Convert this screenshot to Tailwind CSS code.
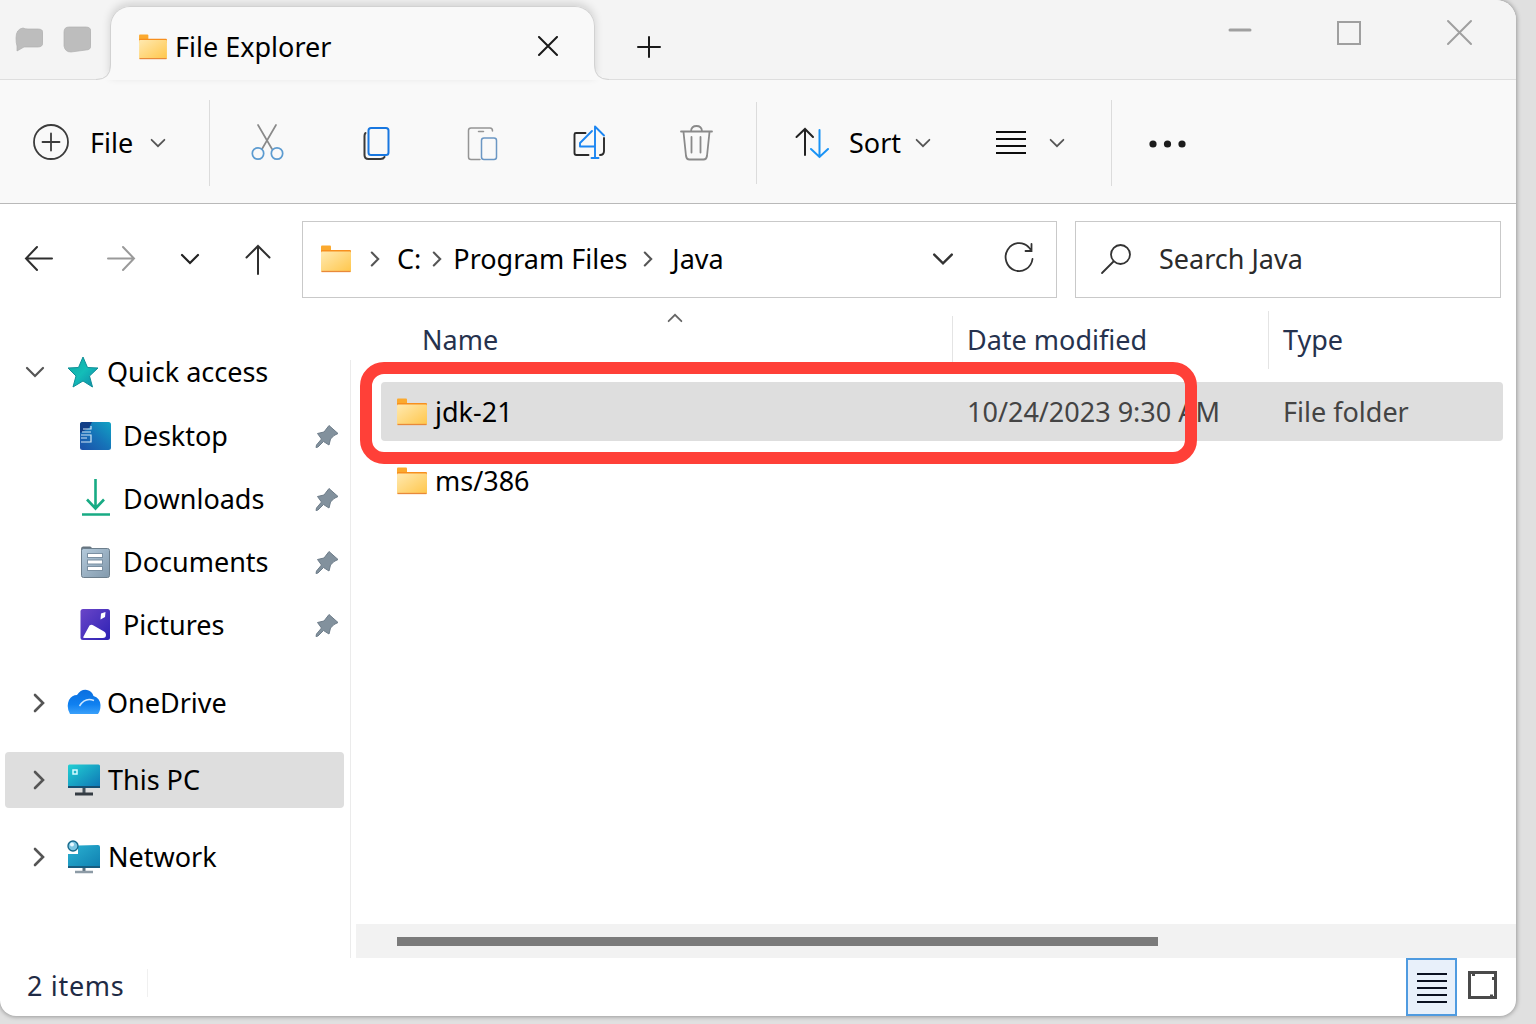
<!DOCTYPE html>
<html lang="en">
<head>
  <meta charset="UTF-8" />
  <meta name="viewport" content="width=device-width, initial-scale=1.0" />
  <title>File Explorer</title>
  <script src="https://cdn.jsdelivr.net/npm/@tailwindcss/browser@4"></script>
</head>
<body class="h-screen bg-[#e0e0e0] pr-5 pb-2 font-['Noto_Sans',sans-serif] text-[27px] leading-9 text-black">

  <!-- Shared icons -->
  <svg class="absolute h-0 w-0" aria-hidden="true">
    <defs>
      <linearGradient id="g-folder" x1="0" y1="0" x2="1" y2="1">
        <stop offset="0" stop-color="#ffe9b0" /><stop offset="1" stop-color="#ffc64a" />
      </linearGradient>
      <linearGradient id="g-star" x1="0" y1="0" x2="1" y2="1">
        <stop offset="0" stop-color="#10a9a0" /><stop offset="0.5" stop-color="#13bdb8" /><stop offset="1" stop-color="#0d86a8" />
      </linearGradient>
      <linearGradient id="g-desktop" x1="0" y1="1" x2="1" y2="0">
        <stop offset="0" stop-color="#1b4fa8" /><stop offset="0.5" stop-color="#1673b8" /><stop offset="1" stop-color="#12a3c4" />
      </linearGradient>
      <linearGradient id="g-docs" x1="0" y1="0" x2="1" y2="1">
        <stop offset="0" stop-color="#b4cadb" /><stop offset="1" stop-color="#8299ac" />
      </linearGradient>
      <linearGradient id="g-pics" x1="0" y1="0" x2="1" y2="1">
        <stop offset="0" stop-color="#6a45c8" /><stop offset="1" stop-color="#2d22b4" />
      </linearGradient>
      <linearGradient id="g-cloud" x1="0" y1="0" x2="0" y2="1">
        <stop offset="0" stop-color="#0a6fe0" /><stop offset="0.6" stop-color="#0f80f0" /><stop offset="1" stop-color="#3aa0fa" />
      </linearGradient>
      <linearGradient id="g-screen" x1="0" y1="0" x2="1" y2="1">
        <stop offset="0" stop-color="#22d0d4" /><stop offset="1" stop-color="#0e74b4" />
      </linearGradient>
      <linearGradient id="g-net" x1="0" y1="0" x2="1" y2="1">
        <stop offset="0" stop-color="#2bb2d2" /><stop offset="1" stop-color="#0f7fb0" />
      </linearGradient>
    </defs>
    <symbol id="folder" viewBox="0 0 30 28">
      <path d="M0 1.500Q0 .5 1 .5h8q1 0 1 1V8H0z" fill="#fba92e" />
      <rect y="5" width="30" height="5" rx="1" fill="#f78f1e" />
      <rect y="6.500" width="30" height="20.500" rx="1" fill="url(#g-folder)" />
      <path d="M.5 26.500h29" stroke="#e8893a" stroke-width="1.300" />
    </symbol>
    <symbol id="pin" viewBox="0 0 24 24">
      <path d="M14 1.500 23 9.500l-4 2-3.500 3.500-1.500 6L8.500 17.500 3 23l-2 .5.500-2.500 5-6L2.500 9.500 9 8z" fill="#82919d" stroke="#6d7c89" stroke-width="1" stroke-linejoin="round" />
    </symbol>
    <symbol id="down" viewBox="0 0 20 12">
      <path d="M2 2l8 8 8-8" fill="none" stroke="currentColor" stroke-width="2.200" stroke-linecap="round" />
    </symbol>
    <symbol id="right" viewBox="0 0 12 20">
      <path d="M2 2l8 8-8 8" fill="none" stroke="currentColor" stroke-width="2.600" stroke-linecap="round" />
    </symbol>
  </svg>

  <div class="flex h-full flex-col overflow-hidden rounded-tr-[20px] rounded-b-[16px] bg-white shadow-[0_0_4px_1px_#9a9a9a]">

    <!-- Title bar -->
    <header class="flex h-20 shrink-0 items-end border-b border-[#dedede] bg-[#f4f4f4]">
      <div class="flex h-full w-[110px] items-center gap-5 pl-[15px] text-[#bdbdbd]">
        <svg class="h-7 w-7" viewBox="0 0 28 28" fill="currentColor"><path d="M1 12Q1 3 8 2q2 1 5 1h10q5 0 5 4v9q0 5-5 5H9l-7 4V20Q1 17 1 12z" stroke="#b0b0b0" stroke-width=".7" /></svg>
        <svg class="h-7 w-7" viewBox="0 0 28 28" fill="currentColor"><path d="M6 1h17q5 0 5 5v13q0 5-5 5l-15 2q-6 0-7-6V6q0-5 5-5z" stroke="#b0b0b0" stroke-width=".7" /></svg>
      </div>
      <div class="relative -mb-px flex h-[74px] w-[485px] items-center rounded-t-[20px] bg-[#f9f9f9] pt-2 pr-9 pl-[29px] shadow-[0_-3px_8px_rgba(0,0,0,0.14)]">
        <div class="absolute inset-0 rounded-t-[20px] border border-b-0 border-[#d2d2d2]"></div>
        <!-- Flared bottom corners of the tab -->
        <svg class="absolute bottom-0 -left-[14px] h-[15px] w-[15px]" viewBox="0 0 15 15"><path d="M0 15V14.500Q14.500 14.500 14.500 0h.5v15z" fill="#f9f9f9" /><path d="M0 14.500Q14.500 14.500 14.500 0" fill="none" stroke="#d2d2d2" /></svg>
        <svg class="absolute -right-[14px] bottom-0 h-[15px] w-[15px]" viewBox="0 0 15 15"><path d="M15 15V14.500Q.5 14.500 .5 0H0v15z" fill="#f9f9f9" /><path d="M15 14.500Q.5 14.500 .5 0" fill="none" stroke="#d2d2d2" /></svg>
        <svg class="h-[26px] w-7"><use href="#folder" /></svg>
        <h1 class="ml-2 flex-1">File Explorer</h1>
        <button class="relative" aria-label="Close tab">
          <svg class="h-[22px] w-[22px]" viewBox="0 0 22 22"><path d="M2 1l18 18M20 1L2 19" stroke="#1a1a1a" stroke-width="2" stroke-linecap="round" /></svg>
        </button>
      </div>
      <button class="mb-5 ml-[42px]" aria-label="New tab">
        <svg class="h-6 w-6" viewBox="0 0 24 24"><path d="M1 12h22M12 2v20" stroke="#1a1a1a" stroke-width="2" stroke-linecap="round" /></svg>
      </button>
      <div class="mr-[43px] mb-8 ml-auto flex items-center gap-[82px] text-[#9f9f9f]">
        <button aria-label="Minimize"><svg class="h-7 w-7" viewBox="0 0 28 28"><path d="M5 11h20" stroke="currentColor" stroke-width="3" stroke-linecap="round" /></svg></button>
        <button aria-label="Maximize"><svg class="h-7 w-7" viewBox="0 0 28 28"><rect x="3" y="3" width="22" height="22" fill="none" stroke="currentColor" stroke-width="2" /></svg></button>
        <button aria-label="Close"><svg class="h-7 w-7" viewBox="0 0 28 28"><path d="M3 2l23 23M26 2L3 25" stroke="currentColor" stroke-width="2" stroke-linecap="round" /></svg></button>
      </div>
    </header>

    <!-- Toolbar -->
    <div class="flex h-[124px] shrink-0 items-center border-b border-[#b9b9b9] bg-[#f9f9f9] pt-[3px]">
      <button class="flex w-[209px] items-center pl-8">
        <svg class="h-[38px] w-[38px]" viewBox="0 0 38 38" fill="none" stroke="#3c3c3c" stroke-width="1.800"><circle cx="19" cy="18" r="17" /><path d="M10.500 18h17M19 9.500v17" stroke-linecap="round" /></svg>
        <span class="mr-[17px] ml-5">File</span>
        <svg class="h-[10px] w-4 text-[#555]"><use href="#down" /></svg>
      </button>
      <div class="h-[86px] border-l border-[#dcdcdc]"></div>
      <div class="flex px-1">
        <button class="flex w-[107px] justify-center" aria-label="Cut">
          <svg class="h-10 w-10" viewBox="0 0 40 40" fill="none" stroke-width="1.700"><path d="M10 2l14 24M28 2L14 26" stroke="#8a8a8a" stroke-linecap="round" /><circle cx="10" cy="30.500" r="5.700" stroke="#5c9bd0" /><circle cx="29" cy="30.500" r="5.700" stroke="#5c9bd0" /></svg>
        </button>
        <button class="flex w-[107px] justify-center" aria-label="Copy">
          <svg class="h-10 w-10" viewBox="0 0 40 40" fill="none" stroke-width="2"><path d="M10.500 10q-1 1-1 3v19q0 4 4 4h12q3 0 4-2" stroke="#3a3a3a" stroke-linecap="round" /><rect x="13.500" y="5" width="20" height="27" rx="2.500" stroke="#1877e0" /></svg>
        </button>
        <button class="flex w-[107px] justify-center" aria-label="Paste">
          <svg class="h-10 w-10" viewBox="0 0 40 40" fill="none" stroke-width="1.500"><path d="M18 36.500H9q-2.500 0-2.500-2.500V7.500Q6.500 5 9 5h19q2.500 0 2.500 3M16.500 8.500h5" stroke="#959595" stroke-linecap="round" /><rect x="19.500" y="15" width="15" height="21.500" rx="2.500" stroke="#6b97c4" /></svg>
        </button>
        <button class="flex w-[107px] justify-center" aria-label="Rename">
          <svg class="h-10 w-10" viewBox="0 0 40 40" fill="none" stroke-width="1.900"><path d="M16.500 10H7q-1.500 0-1.500 1.500V30q0 2 2 2h12M35 15v13q0 4-4 4" stroke="#2b2b2b" stroke-linecap="round" /><path d="M23 8L11 20v3.500h15M26 35V3.500l9 9M22.500 35h7" stroke="#1c86f2" stroke-linejoin="round" stroke-linecap="round" /></svg>
        </button>
        <button class="flex w-[107px] justify-center" aria-label="Delete">
          <svg class="h-10 w-10" viewBox="0 0 40 40" fill="none" stroke="#8a8a8a" stroke-width="1.800" stroke-linecap="round"><path d="M5 8.500h31M7.500 9l2.500 24q.5 3.500 3.500 3.500h14q3 0 3.500-3.500L33.500 9M15 8q.5-5 5.500-5T26 8M15.500 14v15.500M24.500 14v15.500" /></svg>
        </button>
      </div>
      <div class="ml-[3px] h-[82px] border-l border-[#dcdcdc]"></div>
      <button class="ml-[38px] flex items-center">
        <svg class="h-8 w-[34px]" viewBox="0 0 34 32" fill="none" stroke-width="2" stroke-linecap="round"><path d="M10 28V2M1.500 10L10 2l8 8" stroke="#222" /><path d="M24.500 3v27M16 22l8.500 8 8.500-8" stroke="#1a93f5" /></svg>
        <span class="mr-[14px] ml-5">Sort</span>
        <svg class="h-[10px] w-4 text-[#555]"><use href="#down" /></svg>
      </button>
      <button class="ml-16 flex items-center gap-[22px]" aria-label="View">
        <svg class="h-7 w-8" viewBox="0 0 32 28"><path d="M1 3h30M1 10h30M1 17h30M1 24h30" stroke="#0d0d0d" stroke-width="2.200" /></svg>
        <svg class="h-[10px] w-4 text-[#555]"><use href="#down" /></svg>
      </button>
      <div class="ml-[46px] h-[86px] border-l border-[#dcdcdc]"></div>
      <button class="ml-9 pt-0.5" aria-label="More">
        <svg class="h-2 w-10" viewBox="0 0 40 8" fill="#1c1c1c"><circle cx="5" cy="4" r="3.600" /><circle cx="19.500" cy="4" r="3.600" /><circle cx="34" cy="4" r="3.600" /></svg>
      </button>
    </div>

    <!-- Navigation row -->
    <div class="flex shrink-0 items-center pt-[17px] pr-[15px]">
      <nav class="flex w-[302px] shrink-0 items-center pb-0.5 pl-6">
        <button class="mr-[52px]" aria-label="Back"><svg class="h-7 w-[30px]" viewBox="0 0 30 28" fill="none" stroke="#2f2f2f" stroke-width="2" stroke-linecap="round"><path d="M28 13.500H2M13 2L2 13.500 13 25" /></svg></button>
        <button class="mr-11" aria-label="Forward"><svg class="h-7 w-[30px]" viewBox="0 0 30 28" fill="none" stroke="#9a9a9a" stroke-width="2" stroke-linecap="round"><path d="M2 13.500h26M17 2l11 11.500L17 25" /></svg></button>
        <button class="mr-[45px]" aria-label="Recent locations"><svg class="h-3 w-5 text-[#222]"><use href="#down" /></svg></button>
        <button aria-label="Up"><svg class="h-8 w-[26px]" viewBox="0 0 26 32" fill="none" stroke="#2f2f2f" stroke-width="2" stroke-linecap="round"><path d="M13 31V3M1.500 14.500L13 3l11.500 11.500" /></svg></button>
      </nav>
      <div class="flex h-[77px] flex-1 items-center border border-[#c9c9c9] pr-[22px] pb-0.5 pl-[18px] whitespace-nowrap">
        <svg class="mr-[19px] h-7 w-[30px]"><use href="#folder" /></svg>
        <svg class="mr-[17px] h-4 w-[10px] text-[#555]"><use href="#right" /></svg>
        <a href="#">C:</a>
        <svg class="mx-[11px] h-4 w-[10px] text-[#555]"><use href="#right" /></svg>
        <a href="#">Program Files</a>
        <svg class="mr-[19px] ml-4 h-4 w-[10px] text-[#555]"><use href="#right" /></svg>
        <a href="#">Java</a>
        <button class="mr-[50px] ml-auto" aria-label="Previous locations"><svg class="h-[14px] w-[22px] text-[#333]"><use href="#down" /></svg></button>
        <button aria-label="Refresh"><svg class="h-[34px] w-[30px]" viewBox="0 0 30 34" fill="none" stroke="#333" stroke-width="1.800" stroke-linecap="round"><path d="M28.500 17A13.500 14 0 1 1 24.500 5L27 8M27.500 2v7h-6" /></svg></button>
      </div>
      <label class="ml-[18px] flex h-[77px] w-[426px] items-center border border-[#c9c9c9] pb-0.5 pl-6">
        <svg class="h-8 w-8 shrink-0" viewBox="0 0 32 32" fill="none" stroke="#333" stroke-width="1.800" stroke-linecap="round"><circle cx="20.500" cy="11.500" r="9.500" /><path d="M13.500 18.500L2 30" /></svg>
        <input type="search" placeholder="Search Java" aria-label="Search Java" class="ml-[27px] w-full min-w-0 outline-none placeholder:text-[#2b2b2b]" />
      </label>
    </div>

    <div class="flex min-h-0 flex-1">
      <!-- Sidebar -->
      <aside class="w-[350px] shrink-0 pt-[46px] pr-[6px] pl-[5px]">
        <a href="#" class="flex h-14 items-center pl-5">
          <svg class="h-3 w-5 text-[#555]"><use href="#down" /></svg>
          <svg class="mr-2 ml-[22px] h-8 w-8" viewBox="0 0 32 32"><path d="M16 1l4.500 10.500L31 12l-8.500 8 3 11L16 25l-10 6 3-11L1 12l10.500-.5z" fill="url(#g-star)" stroke="#0f8f97" stroke-linejoin="round" /></svg>
          Quick access
        </a>
        <div class="mt-1 pr-[5px] pl-[74px]">
          <a href="#" class="flex h-[63px] items-center">
            <svg class="mr-3 h-8 w-8" viewBox="0 0 32 32"><rect x="1" y="2" width="31" height="28" rx="2.500" fill="url(#g-desktop)" /><path d="M1 4.500Q1 2 3.500 2H13l-3 6-9 5z" fill="#123f87" /><path d="M3 12h9M4 9h8V6M2 15h10v7H2M2 18h6" fill="none" stroke="#cfe6f5" stroke-width="1.200" /></svg>
            <span class="flex-1">Desktop</span>
            <svg class="h-6 w-6"><use href="#pin" /></svg>
          </a>
          <a href="#" class="flex h-[63px] items-center">
            <svg class="mr-3 h-10 w-8" viewBox="0 0 32 40" fill="none" stroke="#18ab84" stroke-width="2.600"><path d="M16.500 0v29M8 20.500l8.500 9 8.500-9M3 35.500h28" /></svg>
            <span class="flex-1">Downloads</span>
            <svg class="h-6 w-6"><use href="#pin" /></svg>
          </a>
          <a href="#" class="flex h-[63px] items-center">
            <svg class="mr-3 h-8 w-8" viewBox="0 0 32 32"><path d="M2 3q0-2.500 2-2.500h7q1.500 0 2 2V6H2z" fill="#66747f" /><rect x="2.500" y="2.500" width="28" height="29" rx="2" fill="url(#g-docs)" stroke="#6c7e8c" /><path d="M8 9.500h16M8 16h16M8 22.500h16" stroke="#7b90a2" stroke-width="5" /><path d="M9 9.500h14M9 16h14M9 22.500h14" stroke="#fff" stroke-width="2.800" /></svg>
            <span class="flex-1">Documents</span>
            <svg class="h-6 w-6"><use href="#pin" /></svg>
          </a>
          <a href="#" class="flex h-[63px] items-center">
            <svg class="mr-3 h-8 w-8" viewBox="0 0 32 32"><rect x="1.500" y="0" width="29.500" height="31" rx="2.500" fill="url(#g-pics)" /><path d="M4 28.500Q8 21 10.500 16.500q2-1.500 4 0L25 22.500q3 2 1.500 5.500-1 1-3 1H5.500z" fill="#fff" /><path d="M22 4.500l4.500-1.500-.5 5-4.500 2.500z" fill="#fff" /></svg>
            <span class="flex-1">Pictures</span>
            <svg class="h-6 w-6"><use href="#pin" /></svg>
          </a>
        </div>
        <div class="mt-[19px] flex flex-col gap-[21px]">
          <a href="#" class="flex h-14 items-center pl-7">
            <svg class="h-5 w-3 text-[#555]"><use href="#right" /></svg>
            <svg class="mr-[6px] ml-[22px] h-8 w-[34px]" viewBox="0 0 34 32"><path d="M3 27Q-1 20 2 13q3-5 8-5Q14 2 20 3q5 1 6.500 6Q33 11 33.500 18q0 6-2.500 9z" fill="url(#g-cloud)" /><path d="M12.500 19Q18 10 27 13.500" fill="none" stroke="#cfe8ff" stroke-width="1.500" /></svg>
            OneDrive
          </a>
          <a href="#" class="flex h-14 items-center rounded-[4px] bg-[#dedede] pl-7">
            <svg class="h-5 w-3 text-[#555]"><use href="#right" /></svg>
            <svg class="mr-[7px] ml-[22px] h-[34px] w-[34px]" viewBox="0 0 34 34"><rect x="1" y="1.500" width="32" height="23.500" rx="1.500" fill="url(#g-screen)" /><path d="M1 24h32" stroke="#164f72" stroke-width="2" /><path d="M17 25v6" stroke="#44505a" stroke-width="3" /><path d="M8 31h18" stroke="#343b42" stroke-width="3" /><rect x="6" y="7" width="4" height="4" fill="none" stroke="#d5fbff" stroke-width="1.500" /></svg>
            This PC
          </a>
          <a href="#" class="flex h-14 items-center pl-7">
            <svg class="h-5 w-3 text-[#555]"><use href="#right" /></svg>
            <svg class="mr-[7px] ml-[22px] h-[34px] w-[34px]" viewBox="0 0 34 34"><path d="M1 14h10V5.500l20-.5q2 0 2 2v20q0 1-1 1H2q-1 0-1-1z" fill="url(#g-net)" /><path d="M1 27h32" stroke="#175d80" stroke-width="1.800" /><path d="M17 28v3" stroke="#5e7280" stroke-width="3" /><path d="M8 32h18" stroke="#8d9ba6" stroke-width="2.400" /><circle cx="6" cy="6" r="5" fill="#7cc6e2" stroke="#176a8c" stroke-width="1.400" /><circle cx="5" cy="4.500" r="2" fill="#e6f8ff" /></svg>
            Network
          </a>
        </div>
      </aside>

      <!-- File list -->
      <main class="mt-[62px] flex min-w-0 flex-1 flex-col border-l border-[#ebebeb]">
        <div class="relative -mt-[62px] mr-[13px] ml-[30px]">
          <table class="w-full table-fixed border-separate border-spacing-x-0 border-spacing-y-[10px] text-left">
            <thead>
              <tr class="text-[#26324e]">
                <th class="relative h-16 pl-[41px] font-normal" aria-sort="ascending">
                  Name
                  <svg class="absolute top-[5px] left-[286px] h-[10px] w-4 rotate-180 text-[#666]"><use href="#down" /></svg>
                </th>
                <th class="w-[316px] p-0 font-normal"><div class="flex h-12 items-center border-l border-[#e4e4e4] pl-[14px]">Date modified</div></th>
                <th class="w-[235px] p-0 font-normal"><div class="flex h-[58px] items-center border-l border-[#e4e4e4] pl-[14px]">Type</div></th>
              </tr>
            </thead>
            <tbody>
              <tr class="text-[#444]">
                <td class="h-[59px] rounded-l-[4px] bg-[#dedede] pl-4 text-black"><a href="#" class="flex items-center gap-2"><svg class="h-7 w-[30px]"><use href="#folder" /></svg>jdk-21</a></td>
                <td class="bg-[#dedede] pl-[15px] whitespace-nowrap">10/24/2023 9:30 AM</td>
                <td class="rounded-r-[4px] bg-[#dedede] pl-[15px]">File folder</td>
              </tr>
              <tr>
                <td class="h-[59px] pl-4"><a href="#" class="flex items-center gap-2"><svg class="h-7 w-[30px]"><use href="#folder" /></svg>ms/386</a></td>
                <td></td>
                <td></td>
              </tr>
            </tbody>
          </table>
          <!-- Highlight around the selected folder -->
          <div class="pointer-events-none absolute top-16 -left-[21px] h-[102px] w-[837px] rounded-[24px] border-12 border-[#ff4038]"></div>
        </div>
        <div class="mt-auto ml-[5px] flex h-[34px] items-center bg-[#f2f2f2] pl-[41px]">
          <div class="h-[9px] w-[68%] bg-[#7b7b7b]"></div>
        </div>
      </main>
    </div>

    <!-- Status bar -->
    <footer class="flex h-[58px] shrink-0 items-center pr-[19px] pl-[27px] text-[#1f2b45]">
      <span class="pb-0.5 tracking-wide">2 items</span>
      <div class="mb-2 ml-[23px] h-7 border-l border-[#f0f0f0]"></div>
      <button class="ml-auto flex h-full w-[51px] items-center justify-center border-2 border-[#4f9be0] bg-[#e8f0fa]" aria-label="Details view">
        <svg class="h-8 w-[30px]" viewBox="0 0 30 32"><path d="M0 3h30M0 10h30M0 17h30M0 24h30M0 31h30" stroke="#0a1020" stroke-width="2" /></svg>
      </button>
      <button class="ml-[11px] pb-1" aria-label="Large icons view">
        <svg class="h-7 w-[29px]" viewBox="0 0 29 28"><rect x="1.500" y="1.500" width="26" height="25" fill="#fff" stroke="#4a4a4a" stroke-width="3" /><path d="M4 4h3M25 6v3M22 24.500h3" stroke="#4a4a4a" stroke-width="2" /></svg>
      </button>
    </footer>
  </div>
</body>
</html>
